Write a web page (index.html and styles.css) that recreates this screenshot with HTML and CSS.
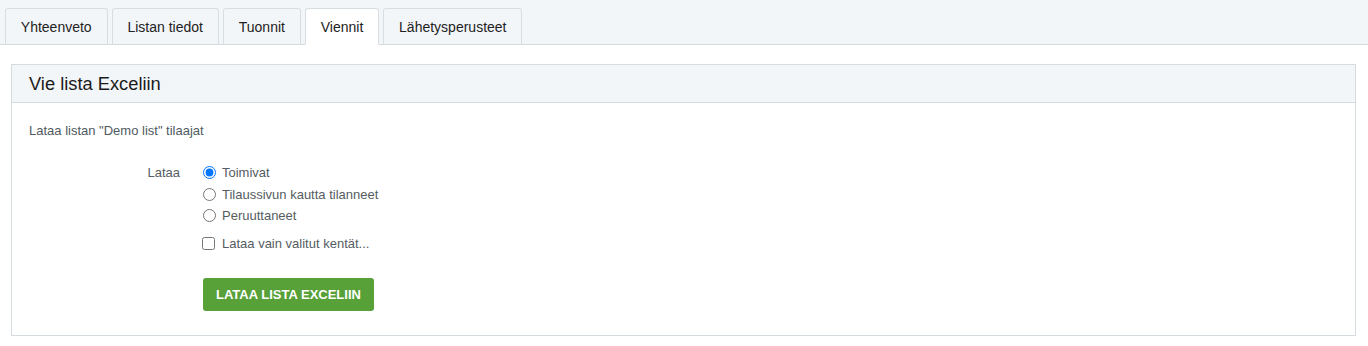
FILE: index.html
```html
<!DOCTYPE html>
<html lang="fi">
<head>
<meta charset="utf-8">
<title>Viennit</title>
<link rel="stylesheet" href="styles.css">
</head>
<body>
<nav class="tabbar">
  <ul class="tabs">
    <li class="tab">Yhteenveto</li>
    <li class="tab">Listan tiedot</li>
    <li class="tab">Tuonnit</li>
    <li class="tab active">Viennit</li>
    <li class="tab">Lähetysperusteet</li>
  </ul>
</nav>
<section class="panel">
  <header class="panel-head">Vie lista Exceliin</header>
  <div class="panel-body">
    <p class="intro">Lataa listan "Demo list" tilaajat</p>
    <form class="form">
      <div class="label">Lataa</div>
      <div class="options">
        <label class="opt"><input type="radio" name="t" checked><span>Toimivat</span></label>
        <label class="opt"><input type="radio" name="t"><span>Tilaussivun kautta tilanneet</span></label>
        <label class="opt"><input type="radio" name="t"><span>Peruuttaneet</span></label>
        <label class="opt check"><input type="checkbox"><span>Lataa vain valitut kentät...</span></label>
        <button type="button" class="btn">LATAA LISTA EXCELIIN</button>
      </div>
    </form>
  </div>
</section>
</body>
</html>
```
FILE: styles.css
```css
* { box-sizing: border-box; }
body {
  margin: 0;
  font-family: "Liberation Sans", Arial, sans-serif;
  background: #fff;
  color: #222;
}
.tabbar {
  height: 45px;
  background: #f3f6f9;
  border-bottom: 1px solid #d3dbdf;
}
.tabs {
  list-style: none;
  margin: 0;
  padding: 8px 0 0 5px;
  display: flex;
  gap: 4px;
}
.tab {
  height: 37px;
  padding: 0 15px 0 14.8px;
  display: flex;
  align-items: center;
  font-size: 14px;
  color: #222;
  background: #f3f6f9;
  border: 1px solid #d7dee2;
  border-radius: 3px 3px 0 0;
  border-bottom-color: #d3dbdf;
}
.tab.active {
  background: #fff;
  border-bottom-color: #fff;
}
.panel {
  margin: 19px 12px 0 11px;
  border: 1px solid #d5dcdf;
}
.panel-head {
  height: 38px;
  background: #f3f6f9;
  border-bottom: 1px solid #d5dcdf;
  padding: 0 17px;
  display: flex;
  align-items: center;
  font-size: 18.3px;
  color: #1b1b1b;
}
.panel-body {
  padding: 19px 17px 24px;
}
.intro {
  margin: 0;
  font-size: 13px;
  line-height: 17px;
  color: #4f5a61;
}
.form {
  margin: 23px 0 0;
  display: grid;
  grid-template-columns: 151px auto;
  column-gap: 23px;
  align-items: start;
}
.label {
  text-align: right;
  font-size: 13px;
  line-height: 21.5px;
  color: #555d62;
}
.options {
  display: flex;
  flex-direction: column;
  align-items: flex-start;
}
.opt {
  height: 21.5px;
  display: flex;
  align-items: center;
  gap: 6px;
  font-size: 13px;
  color: #555d62;
}
.opt input {
  margin: 0;
  width: 13px;
  height: 13px;
}
.opt.check {
  margin-top: 6.5px;
}
.opt.check input {
  margin-left: -1px;
  margin-right: 1px;
}
.btn {
  margin-top: 23.5px;
  height: 33px;
  padding: 0 13px;
  border: none;
  border-radius: 3px;
  background: #58a038;
  color: #fff;
  font-family: "Liberation Sans", Arial, sans-serif;
  font-weight: bold;
  font-size: 13px;
}
```
